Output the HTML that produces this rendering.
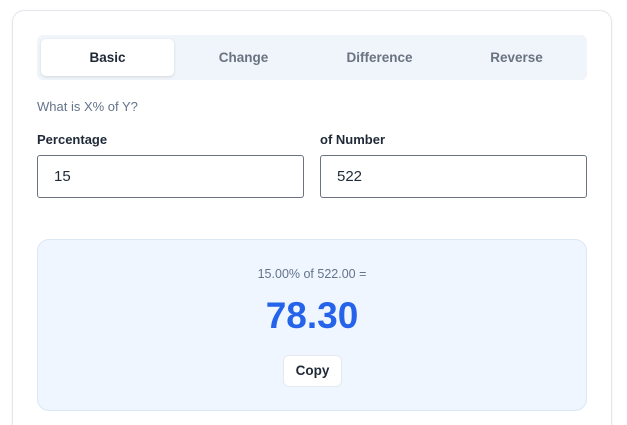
<!DOCTYPE html>
<html style="height:425px;overflow:hidden"><head><style>
body{margin:0;width:627px;height:425px;background:#fff;font-family:"Liberation Sans",sans-serif;position:relative;overflow:hidden}
.card{position:absolute;left:12px;top:10px;width:598px;height:415px;border:1px solid #e3e6ea;border-bottom:none;border-radius:12px 12px 0 0;box-shadow:0 1px 3px rgba(0,0,0,.05)}
.tabs{position:absolute;left:37px;top:35px;width:550px;height:45px;background:#eff5fb;border-radius:6px}
.tab{position:absolute;top:4px;height:37px;line-height:37px;text-align:center;font-size:13.5px;font-weight:bold;color:#6b7280;width:133px}
.tab.active{background:#fff;color:#1f2937;border-radius:5px;box-shadow:0 1px 3px rgba(0,0,0,.12)}
.q{position:absolute;left:37px;top:99px;font-size:13px;color:#64748b}
.lbl{position:absolute;top:132px;font-size:13px;font-weight:bold;color:#1f2937}
.inp{position:absolute;top:155px;width:265px;height:41px;border:1px solid #6b7280;border-radius:3px;font-size:15px;line-height:41px;color:#1f2937;text-indent:16px}
.res{position:absolute;left:37px;top:239px;width:548px;height:170px;background:#eff6ff;border:1px solid #dbe7f5;border-radius:12px}
.eq{position:absolute;left:0;right:0;top:27px;text-align:center;font-size:12.5px;color:#64748b}
.big{position:absolute;left:0;right:0;top:55px;text-align:center;font-size:37px;font-weight:bold;color:#2563eb}
.copy{position:absolute;left:245px;top:115px;width:57px;height:30px;background:#fff;border:1px solid #e5e9ef;border-radius:6px;text-align:center;line-height:30px;font-size:13.5px;font-weight:bold;color:#1f2937}
</style></head><body>
<div class="card"></div>
<div class="tabs">
<div class="tab active" style="left:4px">Basic</div>
<div class="tab" style="left:140px">Change</div>
<div class="tab" style="left:276px">Difference</div>
<div class="tab" style="left:413px">Reverse</div>
</div>
<div class="q">What is X% of Y?</div>
<div class="lbl" style="left:37px">Percentage</div>
<div class="lbl" style="left:320px">of Number</div>
<div class="inp" style="left:37px">15</div>
<div class="inp" style="left:320px">522</div>
<div class="res">
<div class="eq">15.00% of 522.00 =</div>
<div class="big">78.30</div>
<div class="copy">Copy</div>
</div>
</body></html>
